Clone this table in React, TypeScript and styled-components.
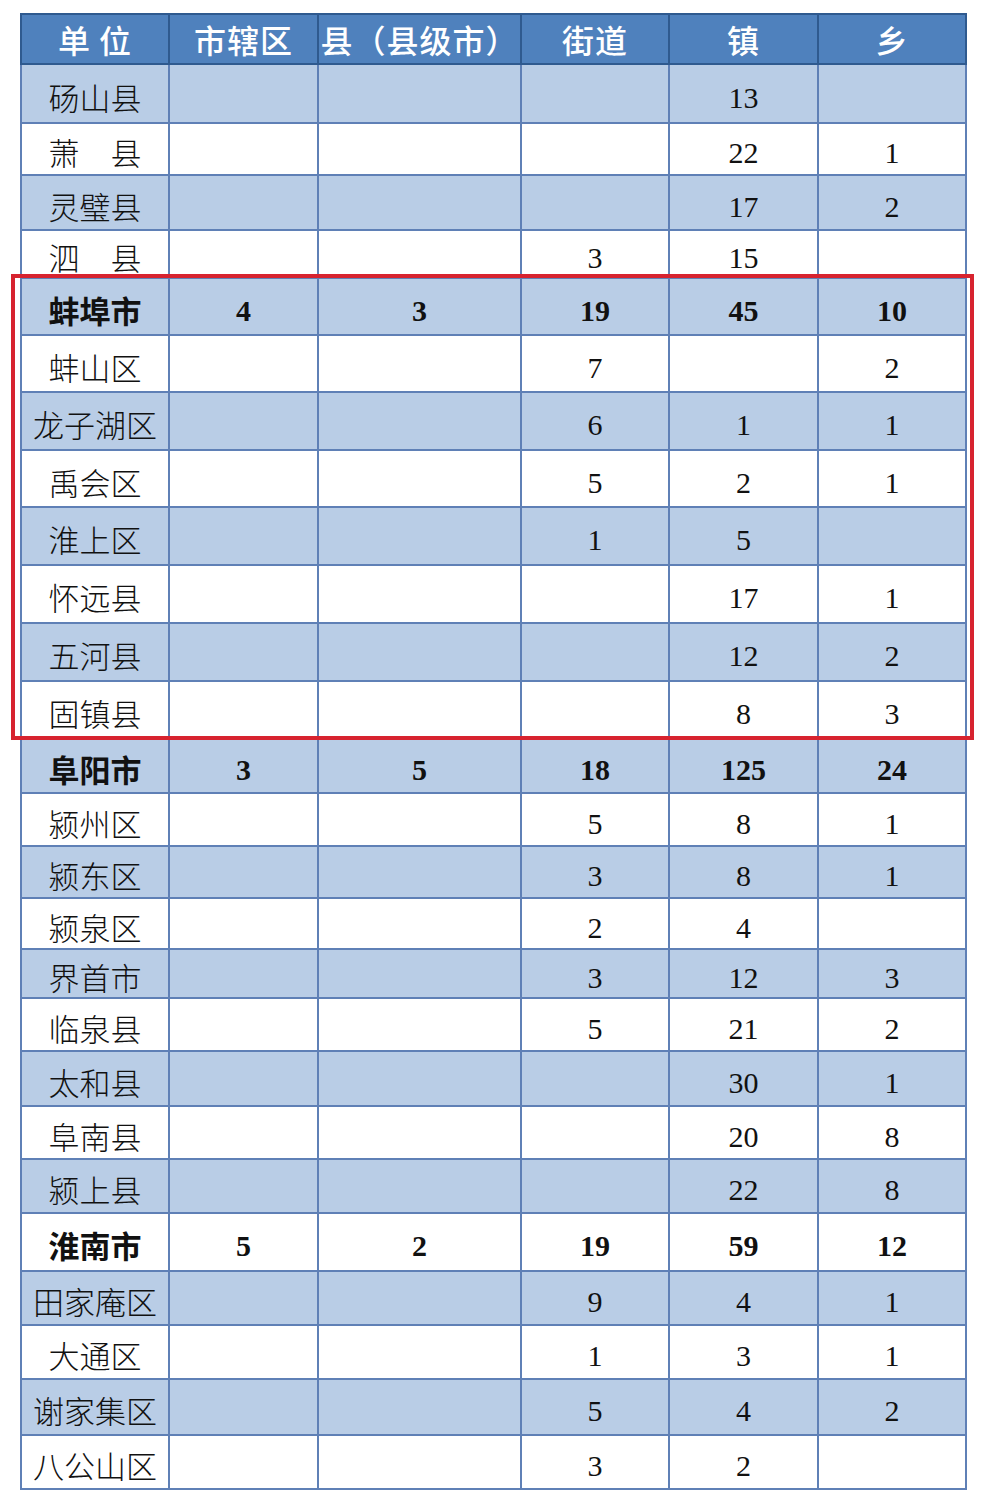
import React from 'react'
import styled, { createGlobalStyle } from 'styled-components'

type Row = {
  name: string
  cells: (number | null)[]
  h: number
  bold?: boolean
}

const GlobalStyle = createGlobalStyle`
  html, body {
    margin: 0;
    padding: 0;
    background: #fff;
  }
`

const Page = styled.div`
  position: relative;
  width: 984px;
  height: 1504px;
  padding: 13px 0 0 20px;
  box-sizing: border-box;
  background: #fff;
  font-family: 'Liberation Serif', 'Noto Sans CJK SC', serif;
`

const Table = styled.table`
  border-collapse: collapse;
  table-layout: fixed;
  width: 945px;
  border: 2px solid #5b7db3;
`

const HeadCell = styled.th`
  height: 48px;
  padding: 0;
  background: #4f81bd;
  color: #fff;
  font-family: 'Noto Sans CJK SC', sans-serif;
  font-weight: 500;
  font-size: 32px;
  letter-spacing: 1px;
  text-align: center;
  border: 2px solid #2f5a8f;
  white-space: nowrap;
  overflow: hidden;
`

const BodyRow = styled.tr<{ $alt: boolean; $h: number }>`
  height: ${(p) => p.$h}px;
  background: ${(p) => (p.$alt ? '#b9cde6' : '#ffffff')};
`

const Cell = styled.td<{ $bold?: boolean }>`
  padding: 7px 0 0;
  border: 2px solid #5f80b6;
  text-align: center;
  color: #111;
  font-size: 30px;
  line-height: 1.1;
  font-weight: ${(p) => (p.$bold ? 700 : 400)};
  white-space: nowrap;
`

const NameCell = styled(Cell)`
  font-family: 'Noto Sans CJK SC', sans-serif;
  font-size: 31px;
  font-weight: ${(p) => (p.$bold ? 700 : 300)};
  letter-spacing: 0;
`

const Highlight = styled.div`
  position: absolute;
  left: 11px;
  top: 274px;
  width: 963px;
  height: 466px;
  box-sizing: border-box;
  border: 4px solid #d7232f;
  pointer-events: none;
`

const widths = [148, 149, 203, 148, 149, 148]
const headers = ['单 位', '市辖区', '县（县级市）', '街道', '镇', '乡']

const rows: Row[] = [
  { name: '砀山县', cells: [null, null, null, 13, null], h: 59 },
  { name: '萧　县', cells: [null, null, null, 22, 1], h: 52 },
  { name: '灵璧县', cells: [null, null, null, 17, 2], h: 55 },
  { name: '泗　县', cells: [null, null, 3, 15, null], h: 48 },
  { name: '蚌埠市', cells: [4, 3, 19, 45, 10], h: 57, bold: true },
  { name: '蚌山区', cells: [null, null, 7, null, 2], h: 57 },
  { name: '龙子湖区', cells: [null, null, 6, 1, 1], h: 58 },
  { name: '禹会区', cells: [null, null, 5, 2, 1], h: 57 },
  { name: '淮上区', cells: [null, null, 1, 5, null], h: 58 },
  { name: '怀远县', cells: [null, null, null, 17, 1], h: 58 },
  { name: '五河县', cells: [null, null, null, 12, 2], h: 58 },
  { name: '固镇县', cells: [null, null, null, 8, 3], h: 58 },
  { name: '阜阳市', cells: [3, 5, 18, 125, 24], h: 54, bold: true },
  { name: '颍州区', cells: [null, null, 5, 8, 1], h: 53 },
  { name: '颍东区', cells: [null, null, 3, 8, 1], h: 52 },
  { name: '颍泉区', cells: [null, null, 2, 4, null], h: 51 },
  { name: '界首市', cells: [null, null, 3, 12, 3], h: 49 },
  { name: '临泉县', cells: [null, null, 5, 21, 2], h: 53 },
  { name: '太和县', cells: [null, null, null, 30, 1], h: 55 },
  { name: '阜南县', cells: [null, null, null, 20, 8], h: 53 },
  { name: '颍上县', cells: [null, null, null, 22, 8], h: 54 },
  { name: '淮南市', cells: [5, 2, 19, 59, 12], h: 58, bold: true },
  { name: '田家庵区', cells: [null, null, 9, 4, 1], h: 54 },
  { name: '大通区', cells: [null, null, 1, 3, 1], h: 54 },
  { name: '谢家集区', cells: [null, null, 5, 4, 2], h: 56 },
  { name: '八公山区', cells: [null, null, 3, 2, null], h: 54 },
]

const App: React.FC = () => (
  <Page>
    <GlobalStyle />
    <Table>
      <colgroup>
        {widths.map((w, i) => (
          <col key={i} style={{ width: w }} />
        ))}
      </colgroup>
      <thead>
        <tr>
          {headers.map((h) => (
            <HeadCell key={h}>{h}</HeadCell>
          ))}
        </tr>
      </thead>
      <tbody>
        {rows.map((r, i) => (
          <BodyRow key={r.name} $alt={i % 2 === 0} $h={r.h}>
            <NameCell $bold={r.bold}>{r.name}</NameCell>
            {r.cells.map((c, j) => (
              <Cell key={j} $bold={r.bold}>
                {c ?? ''}
              </Cell>
            ))}
          </BodyRow>
        ))}
      </tbody>
    </Table>
    <Highlight />
  </Page>
)

export default App
